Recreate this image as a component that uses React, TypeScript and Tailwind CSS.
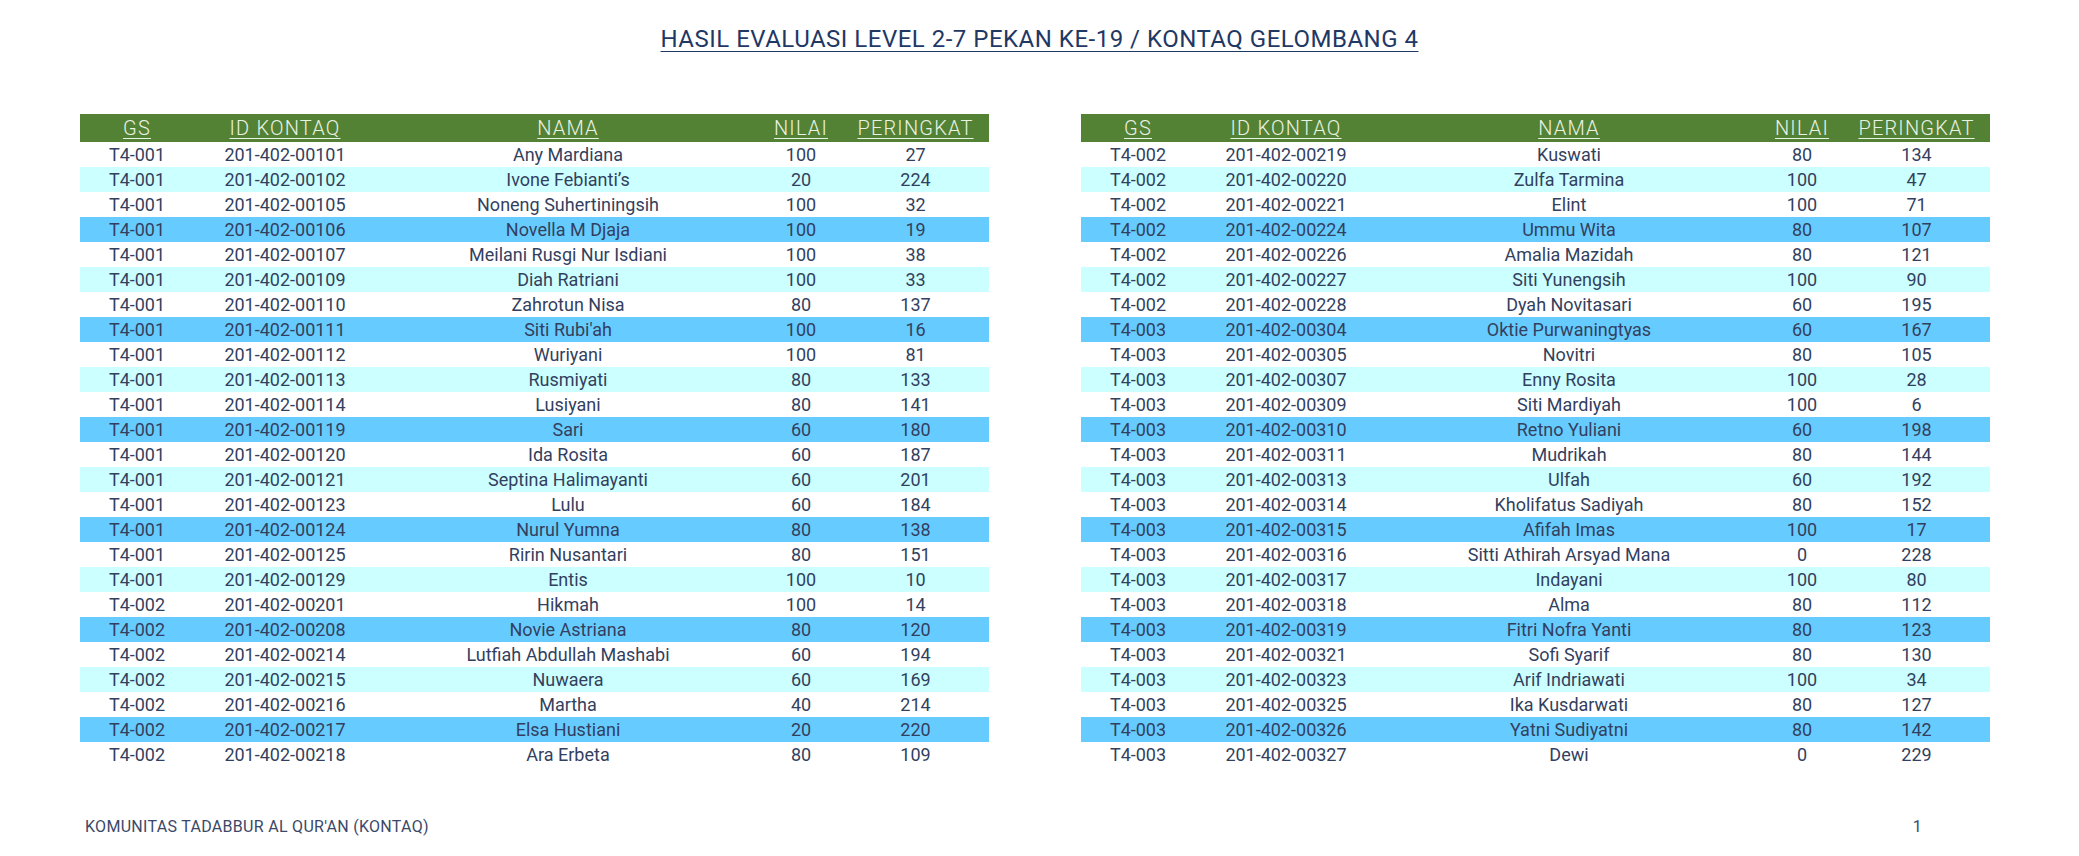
import React from "react";

type Row = [string, string, string, number, number];

const left: Row[] = [
  ["T4-001", "201-402-00101", "Any Mardiana", 100, 27],
  ["T4-001", "201-402-00102", "Ivone Febianti’s", 20, 224],
  ["T4-001", "201-402-00105", "Noneng Suhertiningsih", 100, 32],
  ["T4-001", "201-402-00106", "Novella M Djaja", 100, 19],
  ["T4-001", "201-402-00107", "Meilani Rusgi Nur Isdiani", 100, 38],
  ["T4-001", "201-402-00109", "Diah Ratriani", 100, 33],
  ["T4-001", "201-402-00110", "Zahrotun Nisa", 80, 137],
  ["T4-001", "201-402-00111", "Siti Rubi'ah", 100, 16],
  ["T4-001", "201-402-00112", "Wuriyani", 100, 81],
  ["T4-001", "201-402-00113", "Rusmiyati", 80, 133],
  ["T4-001", "201-402-00114", "Lusiyani", 80, 141],
  ["T4-001", "201-402-00119", "Sari", 60, 180],
  ["T4-001", "201-402-00120", "Ida Rosita", 60, 187],
  ["T4-001", "201-402-00121", "Septina Halimayanti", 60, 201],
  ["T4-001", "201-402-00123", "Lulu", 60, 184],
  ["T4-001", "201-402-00124", "Nurul Yumna", 80, 138],
  ["T4-001", "201-402-00125", "Ririn Nusantari", 80, 151],
  ["T4-001", "201-402-00129", "Entis", 100, 10],
  ["T4-002", "201-402-00201", "Hikmah", 100, 14],
  ["T4-002", "201-402-00208", "Novie Astriana", 80, 120],
  ["T4-002", "201-402-00214", "Lutfiah Abdullah Mashabi", 60, 194],
  ["T4-002", "201-402-00215", "Nuwaera", 60, 169],
  ["T4-002", "201-402-00216", "Martha", 40, 214],
  ["T4-002", "201-402-00217", "Elsa Hustiani", 20, 220],
  ["T4-002", "201-402-00218", "Ara Erbeta", 80, 109],
];

const right: Row[] = [
  ["T4-002", "201-402-00219", "Kuswati", 80, 134],
  ["T4-002", "201-402-00220", "Zulfa Tarmina", 100, 47],
  ["T4-002", "201-402-00221", "Elint", 100, 71],
  ["T4-002", "201-402-00224", "Ummu Wita", 80, 107],
  ["T4-002", "201-402-00226", "Amalia Mazidah", 80, 121],
  ["T4-002", "201-402-00227", "Siti Yunengsih", 100, 90],
  ["T4-002", "201-402-00228", "Dyah Novitasari", 60, 195],
  ["T4-003", "201-402-00304", "Oktie Purwaningtyas", 60, 167],
  ["T4-003", "201-402-00305", "Novitri", 80, 105],
  ["T4-003", "201-402-00307", "Enny Rosita", 100, 28],
  ["T4-003", "201-402-00309", "Siti Mardiyah", 100, 6],
  ["T4-003", "201-402-00310", "Retno Yuliani", 60, 198],
  ["T4-003", "201-402-00311", "Mudrikah", 80, 144],
  ["T4-003", "201-402-00313", "Ulfah", 60, 192],
  ["T4-003", "201-402-00314", "Kholifatus Sadiyah", 80, 152],
  ["T4-003", "201-402-00315", "Afifah Imas", 100, 17],
  ["T4-003", "201-402-00316", "Sitti Athirah Arsyad Mana", 0, 228],
  ["T4-003", "201-402-00317", "Indayani", 100, 80],
  ["T4-003", "201-402-00318", "Alma", 80, 112],
  ["T4-003", "201-402-00319", "Fitri Nofra Yanti", 80, 123],
  ["T4-003", "201-402-00321", "Sofi Syarif", 80, 130],
  ["T4-003", "201-402-00323", "Arif Indriawati", 100, 34],
  ["T4-003", "201-402-00325", "Ika Kusdarwati", 80, 127],
  ["T4-003", "201-402-00326", "Yatni Sudiyatni", 80, 142],
  ["T4-003", "201-402-00327", "Dewi", 0, 229],
];

const bgFor = (i: number) => {
  const m = i % 4;
  if (m === 1) return "bg-[#ccffff]";
  if (m === 3) return "bg-[#66ccff]";
  return "bg-white";
};

const cols = "grid grid-cols-[114px_182px_384px_82px_147px]";

function Table({ rows }: { rows: Row[] }) {
  return (
    <div className="w-[909px]">
      <div className={`${cols} h-[28px] items-center bg-[#548235] text-[#eaf2e3] text-[20px] leading-[28px] tracking-[1.2px] font-light`}>
        {["GS", "ID KONTAQ", "NAMA", "NILAI", "PERINGKAT"].map((h) => (
          <div key={h} className="text-center underline underline-offset-[3px] decoration-1">
            {h}
          </div>
        ))}
      </div>
      {rows.map((r, i) => (
        <div key={r[1]} className={`${cols} h-[25px] items-center ${bgFor(i)}`}>
          <div className="text-center">{r[0]}</div>
          <div className="text-center">{r[1]}</div>
          <div className="text-center whitespace-nowrap">{r[2]}</div>
          <div className="text-center">{r[3]}</div>
          <div className="text-center">{r[4]}</div>
        </div>
      ))}
    </div>
  );
}

export default function App() {
  return (
    <div
      className="w-[2079px] h-[856px] bg-white text-[#333f5e] overflow-hidden"
      style={{ fontFamily: "Roboto, 'Liberation Sans', sans-serif" }}
    >
      <div className="pt-[25px] flex justify-center">
        <div className="text-[24px] leading-[28px] text-[#1f3864] underline underline-offset-[4px] decoration-1 tracking-[0.5px]">
          {" "}HASIL EVALUASI LEVEL 2-7 PEKAN KE-19 / KONTAQ GELOMBANG 4
        </div>
      </div>
      <div className="mt-[61px] flex pl-[80px] gap-[92px] text-[18px] leading-[25px]">
        <Table rows={left} />
        <Table rows={right} />
      </div>
      <div className="mt-[50px] flex justify-between items-center pl-[85px] pr-[157px] text-[16px] leading-[20px] tracking-[0.3px] text-[#3b4868]">
        <div>KOMUNITAS TADABBUR AL QUR'AN (KONTAQ)</div>
        <div className="text-[16px]">1</div>
      </div>
    </div>
  );
}
